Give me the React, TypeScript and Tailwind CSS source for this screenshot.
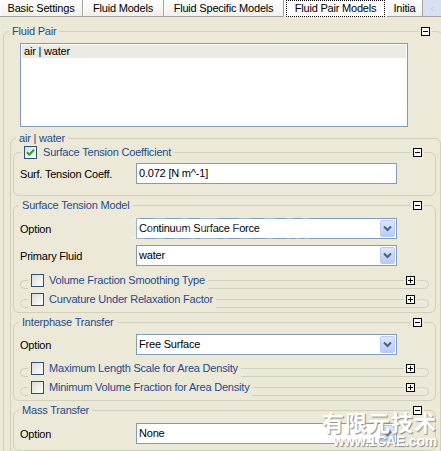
import type { ReactNode } from 'react'

const TITLE = 'text-[#1f4a8c]'

function Box({ plus }: { plus?: boolean }) {
  return (
    <span className="relative flex h-[9px] w-[9px] shrink-0 items-center justify-center border border-black bg-white">
      <span className="absolute h-px w-[5px] bg-black" />
      {plus ? <span className="absolute h-[5px] w-px bg-black" /> : null}
    </span>
  )
}

function Check({ checked }: { checked?: boolean }) {
  return (
    <span className="flex h-[13px] w-[13px] shrink-0 items-center justify-center border border-[#2f4f74] bg-gradient-to-br from-[#dcdcd6] to-white">
      {checked ? (
        <svg width="9" height="9" viewBox="0 0 9 9">
          <path d="M1 4.2 L3.4 6.6 L8 1.8" fill="none" stroke="#21a121" strokeWidth="2" />
        </svg>
      ) : null}
    </span>
  )
}

function Group({
  title,
  check,
  checked,
  noBox,
  className = '',
  headClass = 'pl-[5px] pr-[12px]',
  children,
}: {
  title: string
  check?: boolean
  checked?: boolean
  noBox?: boolean
  className?: string
  headClass?: string
  children: ReactNode
}) {
  return (
    <div className={`rounded-[6px] border border-[#d0d0bf] ${className}`}>
      <div className={`-mt-[7px] flex h-[13px] items-center ${headClass}`}>
        <span className={`flex items-center gap-[6px] bg-[#ece9d8] px-[3px] ${TITLE}`}>
          {check ? <Check checked={checked} /> : null}
          {title}
        </span>
        <span className="flex-1" />
        {noBox ? null : (
          <span className="bg-[#ece9d8] px-[2px]">
            <Box />
          </span>
        )}
      </div>
      {children}
    </div>
  )
}

function Collapsed({ title }: { title: string }) {
  return (
    <div className="h-[9px] rounded-[5px] border border-[#d0d0bf]">
      <div className="-mt-[7px] flex h-[13px] items-center pl-[7px] pr-[11px]">
        <span className={`flex items-center gap-[5px] bg-[#ece9d8] px-[3px] ${TITLE}`}>
          <Check />
          {title}
        </span>
        <span className="flex-1" />
        <span className="bg-[#ece9d8] px-[2px]">
          <Box plus />
        </span>
      </div>
    </div>
  )
}

function Field({ label, value, select }: { label: string; value: string; select?: boolean }) {
  return (
    <div className="flex items-center pl-[6px]">
      <span className="w-[116px] pt-[2px]">{label}</span>
      <div className="flex h-[21px] w-[261px] items-center border border-[#7f9db9] bg-white pl-[2px] pr-px">
        <span className="flex-1">{value}</span>
        {select ? (
          <span className="flex h-[17px] w-[15px] items-center justify-center rounded-[2px] border border-[#b9cbf3] bg-gradient-to-b from-[#dde7fc] to-[#b6cbf7]">
            <svg width="9" height="7" viewBox="0 0 9 7">
              <path d="M1 1.5 L4.5 5 L8 1.5" fill="none" stroke="#4d6185" strokeWidth="2" />
            </svg>
          </span>
        ) : null}
      </div>
    </div>
  )
}

const tabs = [
  { label: 'Basic Settings', w: 'w-[83px]' },
  { label: 'Fluid Models', w: 'w-[81px]' },
  { label: 'Fluid Specific Models', w: 'w-[120px]' },
  { label: 'Fluid Pair Models', w: 'w-[103px]', active: true },
  { label: 'Initia', w: 'w-[36px]' },
]

export default function App() {
  return (
    <div className="relative h-[451px] w-[441px] overflow-hidden bg-[#ece9d8] font-['Liberation_Sans',Arial,sans-serif] text-[11px] tracking-[-0.2px] text-black">
      {/* tab strip */}
      <div className="flex h-[17px] items-stretch">
        {tabs.map((t) =>
          t.active ? (
            <div key={t.label} className={`${t.w} flex items-center justify-center bg-[#fcfcfe] px-[2px]`}>
              <span className="flex h-full w-full items-center justify-center border border-dotted border-black">
                {t.label}
              </span>
            </div>
          ) : (
            <div
              key={t.label}
              className={`${t.w} flex items-center justify-center overflow-hidden whitespace-nowrap border-b border-r border-[#a4a3a0] bg-gradient-to-b from-[#fefefe] to-[#f1f0ea] shadow-[inset_1px_0_0_#ffffff]`}
            >
              {t.label}
            </div>
          ),
        )}
        <div className="flex flex-1 items-center justify-center border-b border-[#a4a3a0] bg-[#d9e0f1] text-[10px] text-[#b7c2dc]">
          ‹
        </div>
      </div>

      {/* Fluid Pair */}
      <div className="mt-[14px] w-[443px] pl-[3px]">
        <Group title="Fluid Pair" headClass="pl-[5px] pr-[10px]" className="h-[440px]">
          <div className="ml-[16px] mt-[5px] h-[84px] w-[388px] border border-[#7f9db9] bg-white p-px">
            <div className="h-[13px] bg-[#eceae4] pl-[2px] leading-[13px]">air | water</div>
          </div>

          <Group title="air | water" noBox className="ml-[6px] mt-[11px] w-[431px] pb-[20px]" headClass="pl-[5px] pr-[12px]">
            <div className="flex flex-col gap-[9px] pl-[2px] pr-[4px] pt-[7px]">
              <Group title="Surface Tension Coefficient" check checked headClass="pl-[7px] pr-[11px]" className="h-[44px]">
                <div className="mt-[4px]">
                  <Field label="Surf. Tension Coeff." value="0.072 [N m^-1]" />
                </div>
              </Group>

              <Group title="Surface Tension Model" headClass="pl-[5px] pr-[11px]" className="pb-[4px]">
                <div className="mt-[6px] flex flex-col gap-[6px]">
                  <Field label="Option" value="Continuum Surface Force" select />
                  <Field label="Primary Fluid" value="water" select />
                </div>
                <div className="mt-[14px] flex flex-col gap-[10px] px-[6px]">
                  <Collapsed title="Volume Fraction Smoothing Type" />
                  <Collapsed title="Curvature Under Relaxation Factor" />
                </div>
              </Group>

              <Group title="Interphase Transfer" headClass="pl-[5px] pr-[11px]" className="pb-[4px]">
                <div className="mt-[5px]">
                  <Field label="Option" value="Free Surface" select />
                </div>
                <div className="mt-[13px] flex flex-col gap-[10px] px-[6px]">
                  <Collapsed title="Maximum Length Scale for Area Density" />
                  <Collapsed title="Minimum Volume Fraction for Area Density" />
                </div>
              </Group>

              <Group title="Mass Transfer" headClass="pl-[5px] pr-[11px]" className="pb-[6px]">
                <div className="mt-[6px]">
                  <Field label="Option" value="None" select />
                </div>
              </Group>
            </div>
          </Group>
        </Group>
      </div>

      {/* watermarks */}
      <div className="pointer-events-none absolute left-[128px] top-[204px] text-[32px] font-bold tracking-[2px] text-white/25">
        1CAE.COM
      </div>
      <div className="pointer-events-none absolute right-[4px] top-[410px] flex flex-col items-end leading-none">
        <span className="font-['Noto_Sans_CJK_SC',sans-serif] text-[22px] font-bold tracking-[1px] text-white [text-shadow:1px_1px_1px_#8a8a8a]">
          有限元技术
        </span>
        <span className="mt-[2px] text-[14px] font-bold text-white [text-shadow:1px_1px_1px_#8a8a8a]">
          www.1CAE.com
        </span>
      </div>
    </div>
  )
}
